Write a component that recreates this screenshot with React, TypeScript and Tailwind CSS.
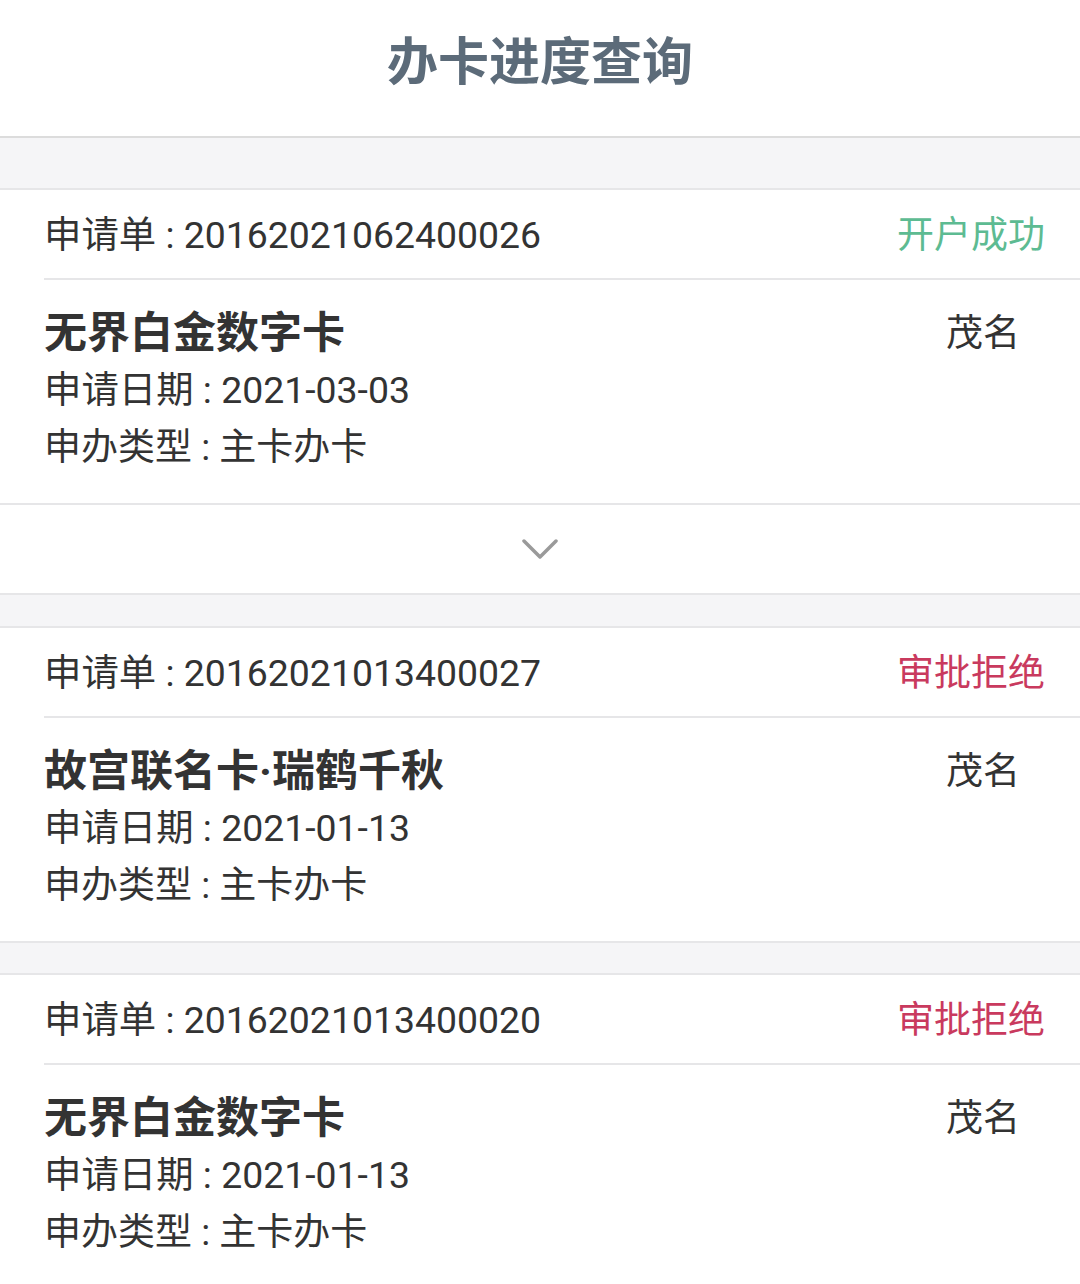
import React from "react";

type Item = {
  id: string;
  status: string;
  ok: boolean;
  name: string;
  date: string;
  expand?: boolean;
};

const items: Item[] = [
  { id: "20162021062400026", status: "开户成功", ok: true, name: "无界白金数字卡", date: "2021-03-03", expand: true },
  { id: "20162021013400027", status: "审批拒绝", ok: false, name: "故宫联名卡·瑞鹤千秋", date: "2021-01-13" },
  { id: "20162021013400020", status: "审批拒绝", ok: false, name: "无界白金数字卡", date: "2021-01-13" },
];

function Card({ item }: { item: Item }) {
  return (
    <div className="bg-white border-y-2 border-[#e6e6e8]">
      <div className="pl-[44px]">
        <div className="flex items-center justify-between h-[90px] pt-[3px] pr-[35px] border-b-2 border-[#e6e6e8]">
          <span className="text-[37.4px] text-[#333333]">申请单 : {item.id}</span>
          <span className={"text-[37px] " + (item.ok ? "text-[#5dbb92]" : "text-[#c93a5e]")}>{item.status}</span>
        </div>
        <div className="flex justify-between pr-[60px] pt-[25px] pb-[27px] text-[#333333]">
          <div className="flex flex-col">
            <span className="text-[43px] font-bold leading-[57px]">{item.name}</span>
            <span className="text-[37.4px] leading-[57px]">申请日期 : {item.date}</span>
            <span className="text-[37px] leading-[57px]">申办类型 : 主卡办卡</span>
          </div>
          <span className="text-[37px] leading-[57px]">茂名</span>
        </div>
      </div>
      {item.expand && (
        <div className="flex items-center justify-center h-[90px] border-t-2 border-[#e6e6e8]">
          <svg width="36" height="22" viewBox="0 0 36 22" fill="none">
            <path d="M2 3 L18 19 L34 3" stroke="#9a9a9a" strokeWidth="3.5" strokeLinecap="round" strokeLinejoin="round" />
          </svg>
        </div>
      )}
    </div>
  );
}

export default function App() {
  return (
    <div
      className="w-[1080px] h-[1284px] overflow-hidden bg-[#f5f5f7]"
      style={{ fontFamily: 'Roboto, "Noto Sans CJK SC", sans-serif' }}
    >
      <div className="h-[138px] bg-white border-b-2 border-[#dcdcdc] flex items-center justify-center">
        <span className="text-[51px] font-bold text-[#5c6b79] pb-[10px]">办卡进度查询</span>
      </div>
      <div className="h-[50px]" />
      <Card item={items[0]} />
      <div className="h-[31px]" />
      <Card item={items[1]} />
      <div className="h-[30px]" />
      <Card item={items[2]} />
    </div>
  );
}
